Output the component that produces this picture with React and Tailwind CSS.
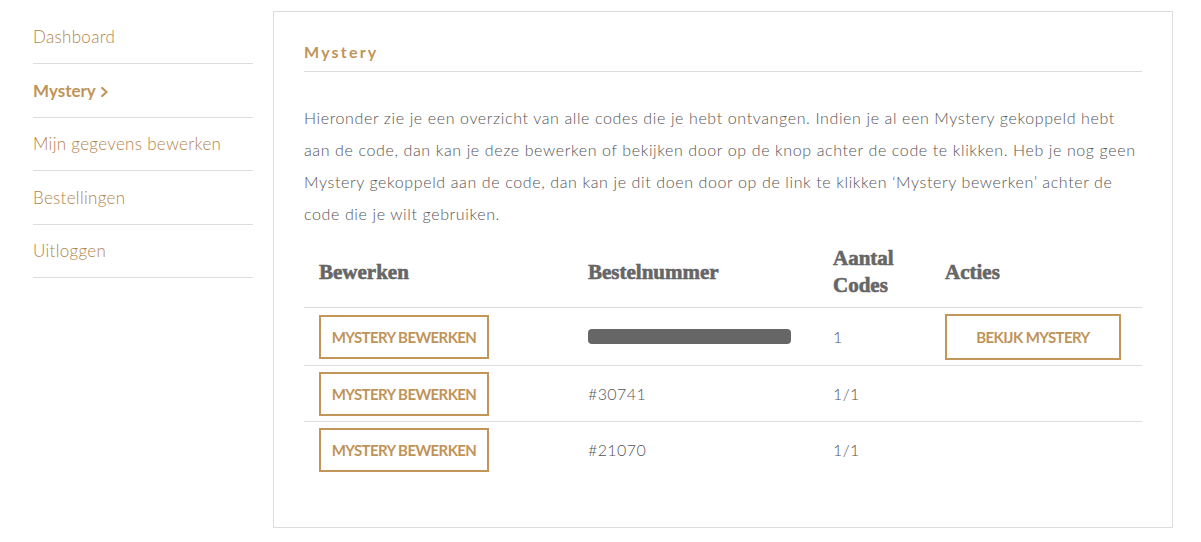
import React from "react";

const lato = { fontFamily: "Lato, 'Open Sans', sans-serif" };

function SideItem({ children, active }) {
  return (
    <div className="border-b border-[#dddddd] pt-[14.5px] pb-[14px]">
      <a
        className={
          "flex items-center leading-[24px] text-[17px] " +
          (active ? "font-bold text-[#bf9458]" : "font-light tracking-[0.3px] text-[#b3844a]")
        }
      >
        {children}
      </a>
    </div>
  );
}

function GoldButton({ children, wide }) {
  return (
    <button
      className={
        "border-2 border-[#c29558] bg-white text-[#bf9458] font-bold uppercase text-[15px] tracking-[-0.6px] leading-none " +
        (wide ? "h-[46px] w-[176px]" : "h-[44px] w-[170px]")
      }
    >
      {children}
    </button>
  );
}

export default function App() {
  const rows = [
    { nr: null, count: "1", action: true },
    { nr: "#30741", count: "1/1", action: false },
    { nr: "#21070", count: "1/1", action: false },
  ];
  return (
    <div
      className="flex bg-white pl-[33px] pt-[11px] pb-[14px] min-h-[542px]"
      style={lato}
    >
      <nav className="w-[220px] shrink-0 -mt-[0.5px]">
        <SideItem>Dashboard</SideItem>
        <SideItem active>
          Mystery
          <svg
            className="ml-[5px] mt-[2px]"
            width="7"
            height="10"
            viewBox="0 0 7 10"
            fill="none"
          >
            <polyline
              points="1.2,1 5.6,5 1.2,9"
              stroke="#bf9458"
              strokeWidth="2.1"
              strokeLinecap="round"
              strokeLinejoin="round"
            />
          </svg>
        </SideItem>
        <SideItem>Mijn gegevens bewerken</SideItem>
        <SideItem>Bestellingen</SideItem>
        <SideItem>Uitloggen</SideItem>
      </nav>

      <main className="ml-[20px] w-[900px] h-[517px] border border-[#dddddd] px-[30px] pt-[28px]">
        <h2 className="border-b border-[#dddddd] pb-[7px] text-[16px] leading-[24px] font-bold tracking-[2.2px] text-[#bf9458]">
          Mystery
        </h2>
        <p className="mt-[29.5px] text-[16px] leading-[32.33px] font-light tracking-[0.62px] text-[#555555]">
          Hieronder zie je een overzicht van alle codes die je hebt ontvangen. Indien je al een Mystery gekoppeld hebt
          <br />
          aan de code, dan kan je deze bewerken of bekijken door op de knop achter de code te klikken. Heb je nog geen
          <br />
          Mystery gekoppeld aan de code, dan kan je dit doen door op de link te klikken ‘Mystery bewerken’ achter de
          <br />
          code die je wilt gebruiken.
        </p>

        <table className="mt-[6.5px] w-full table-fixed border-collapse">
          <colgroup>
            <col className="w-[269px]" />
            <col className="w-[245px]" />
            <col className="w-[112px]" />
            <col />
          </colgroup>
          <thead>
            <tr className="border-b border-[#dddddd]">
              {["Bewerken", "Bestelnummer", "Aantal Codes", "Acties"].map((h) => (
                <th
                  key={h}
                  className="px-[15px] py-[8px] text-left align-middle text-[21px] leading-[27px] font-bold text-[#666666] [-webkit-text-stroke:0.6px_#666666]"
                  style={{ fontFamily: "'Liberation Serif', 'DejaVu Serif', serif" }}
                >
                  {h}
                </th>
              ))}
            </tr>
          </thead>
          <tbody className="text-[16px] font-light tracking-[0.4px] text-[#555555]">
            {rows.map((r, i) => (
              <tr
                key={i}
                className={i < rows.length - 1 ? "border-b border-[#dddddd]" : ""}
              >
                <td className="px-[15px] pt-[6px] pb-[5px] align-middle">
                  <GoldButton>Mystery bewerken</GoldButton>
                </td>
                <td className="px-[15px] pt-[6px] pb-[5px] align-middle">
                  {r.nr ? (
                    r.nr
                  ) : (
                    <div className="h-[15px] w-[203px] rounded-[4px] bg-[#666666] -mt-[1px]" />
                  )}
                </td>
                <td className="px-[15px] pt-[6px] pb-[5px] align-middle">{r.count}</td>
                <td className="px-[15px] pt-[6px] pb-[5px] align-middle">
                  {r.action && <GoldButton wide>Bekijk Mystery</GoldButton>}
                </td>
              </tr>
            ))}
          </tbody>
        </table>
      </main>
    </div>
  );
}
